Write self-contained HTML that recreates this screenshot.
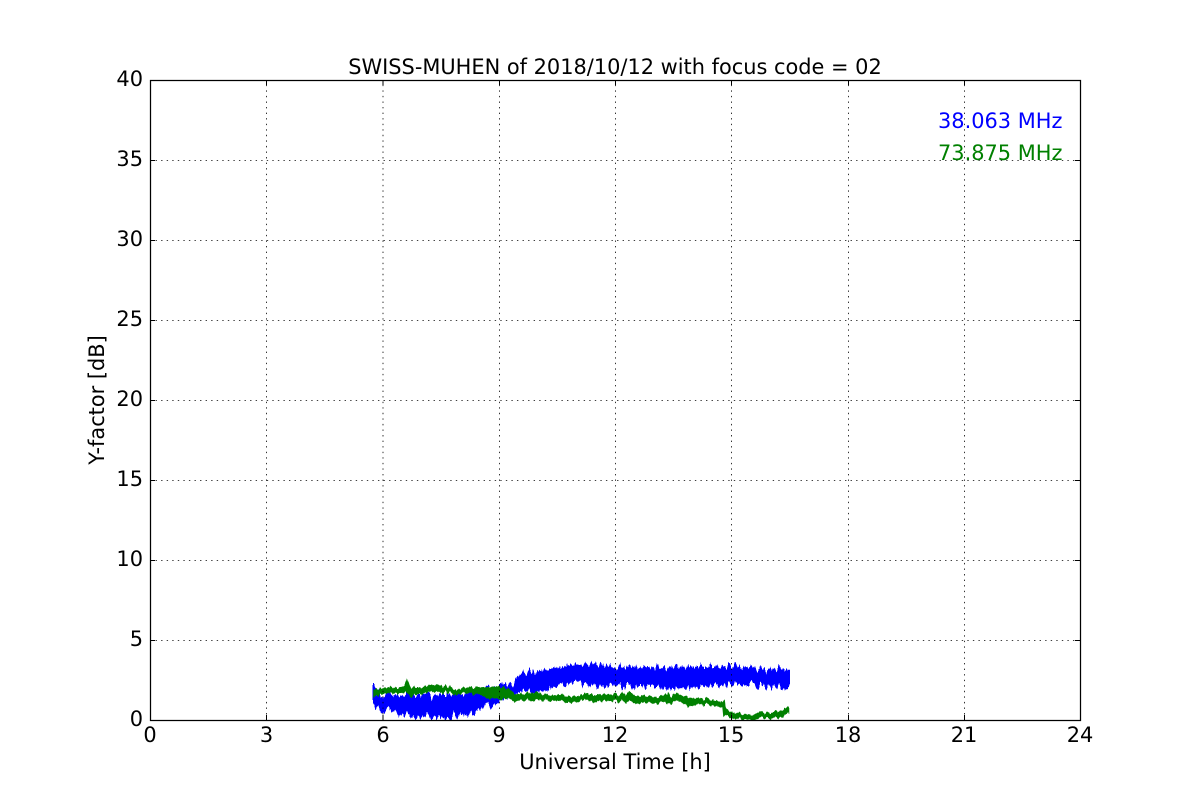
<!DOCTYPE html>
<html>
<head>
<meta charset="utf-8">
<title>SWISS-MUHEN Y-factor</title>
<style>
html,body{margin:0;padding:0;background:#fff;width:1200px;height:800px;overflow:hidden}
svg{display:block}
text{font-family:"DejaVu Sans",sans-serif;font-size:20.9px;fill:#000}
</style>
</head>
<body>
<svg width="1200" height="800" viewBox="0 0 1200 800" xmlns="http://www.w3.org/2000/svg">
<defs>
<clipPath id="ax"><rect x="150" y="80" width="930" height="640.5"/></clipPath>
<filter id="jb" filterUnits="userSpaceOnUse" x="340" y="640" width="480" height="100" color-interpolation-filters="sRGB">
<feTurbulence type="fractalNoise" baseFrequency="0.32 0.012" numOctaves="3" seed="7"/>
<feColorMatrix type="matrix" values="0 0 0 0 0.5  0 1 0 0 0  0 0 0 0 0  0 0 0 0 1"/>
<feDisplacementMap in="SourceGraphic" scale="16" xChannelSelector="R" yChannelSelector="G"/>
<feGaussianBlur stdDeviation="0.35"/>
</filter>
<filter id="jg" filterUnits="userSpaceOnUse" x="340" y="660" width="480" height="80" color-interpolation-filters="sRGB">
<feTurbulence type="fractalNoise" baseFrequency="0.28 0.012" numOctaves="3" seed="3"/>
<feColorMatrix type="matrix" values="0 0 0 0 0.5  0 1 0 0 0  0 0 0 0 0  0 0 0 0 1"/>
<feDisplacementMap in="SourceGraphic" scale="8" xChannelSelector="R" yChannelSelector="G"/>
<feGaussianBlur stdDeviation="0.35"/>
</filter>
</defs>
<rect width="1200" height="800" fill="#fff"/>

<g clip-path="url(#ax)">
<path filter="url(#jb)" d="M374.5 686L374.5 696L380 695L400 696L430 695L460 696L478 693L490 688L496 689L502 686L508 685L514 686L517 677L527 674L533 672L541 673L551 670L561 669L571 666L581 666L597 665L612 669L630 668L660 669L690 668L720 668L733 667L750 669L768 671L778 670L788.5 670L788.5 684L782 687L770 686L754 684L730 684L700 685L680 687L660 685L640 685L613 683L597 685L582 682L567 680L556 686L545 690L537 691L526 690L517 690L512 694L503 698L492 704L482 705L477 711L466 713L448 717L430 715L410 716L399 711L393 708L380 709L376 706L374.5 705Z" fill="#0000ff" stroke="#0000ff" stroke-width="3"/>
<rect x="372.5" y="685" width="1.6" height="15" fill="#0000ff"/>
<path filter="url(#jg)" d="M374 690L384 689L396 689L402 688L405 686L407 681L409 687L420 688L436 686L446 687L458 689L476 688L486 687L490 687L502 687L506 691L516 695L526 694L533 693L544 695L556 695L568 696L580 697L592 695L604 696L616 695L628 693L634 696L646 698L664 697L668 693L670 696L682 696L694 698L706 700L724 702L725 711L736 713L748 715L766 713L778 711L788.5 708L788.5 713L780 716L766 717L754 719L742 718L724 716L723 706L710 705L698 703L688 705L684 702L666 702L648 703L636 703L624 700L606 701L588 701L570 701L552 699L534 700L524 699L512 701L500 698L490 698L482 694L470 693L452 692L434 692L416 693L410 696L408 692L398 693L380 694L374 696Z" fill="#008000" stroke="#008000" stroke-width="1.5"/>
</g>

<g stroke="#000" stroke-width=".8" stroke-dasharray="1.39 4.17" fill="none">
<path d="M266.5 720V80M383 720V80M499.5 720V80M615.5 720V80M731.5 720V80M848.5 720V80M964.5 720V80"/>
<path d="M150 160.5H1080M150 240.5H1080M150 320.5H1080M150 400.5H1080M150 480.5H1080M150 560.5H1080M150 640.5H1080"/>
</g>

<g stroke="#000" stroke-width="1" fill="none">
<path d="M266.5 720v-5M383 720v-5M499.5 720v-5M615.5 720v-5M731.5 720v-5M848.5 720v-5M964.5 720v-5M266.5 80v5M383 80v5M499.5 80v5M615.5 80v5M731.5 80v5M848.5 80v5M964.5 80v5"/>
<path d="M150 160.5h5M150 240.5h5M150 320.5h5M150 400.5h5M150 480.5h5M150 560.5h5M150 640.5h5M1080 160.5h-5M1080 240.5h-5M1080 320.5h-5M1080 400.5h-5M1080 480.5h-5M1080 560.5h-5M1080 640.5h-5"/>
</g>
<rect x="150.5" y="80.5" width="930" height="640" fill="none" stroke="#000" stroke-width="1.25"/>

<g text-anchor="end">
<text x="143" y="726">0</text>
<text x="143" y="646">5</text>
<text x="143" y="566">10</text>
<text x="143" y="486">15</text>
<text x="143" y="406">20</text>
<text x="143" y="326">25</text>
<text x="143" y="246">30</text>
<text x="143" y="166">35</text>
<text x="143" y="86">40</text>
</g>
<g text-anchor="middle">
<text x="150" y="742">0</text>
<text x="266.5" y="742">3</text>
<text x="383" y="742">6</text>
<text x="499" y="742">9</text>
<text x="615" y="742">12</text>
<text x="731" y="742">15</text>
<text x="848" y="742">18</text>
<text x="964" y="742">21</text>
<text x="1080" y="742">24</text>
<text x="615" y="74">SWISS-MUHEN of 2018/10/12 with focus code = 02</text>
<text x="615" y="769">Universal Time [h]</text>
<text transform="translate(104 400) rotate(-90)">Y-factor [dB]</text>
</g>
<text x="938" y="128" style="fill:#0000ff">38.063 MHz</text>
<text x="938" y="160" style="fill:#008000">73.875 MHz</text>
</svg>
</body>
</html>
